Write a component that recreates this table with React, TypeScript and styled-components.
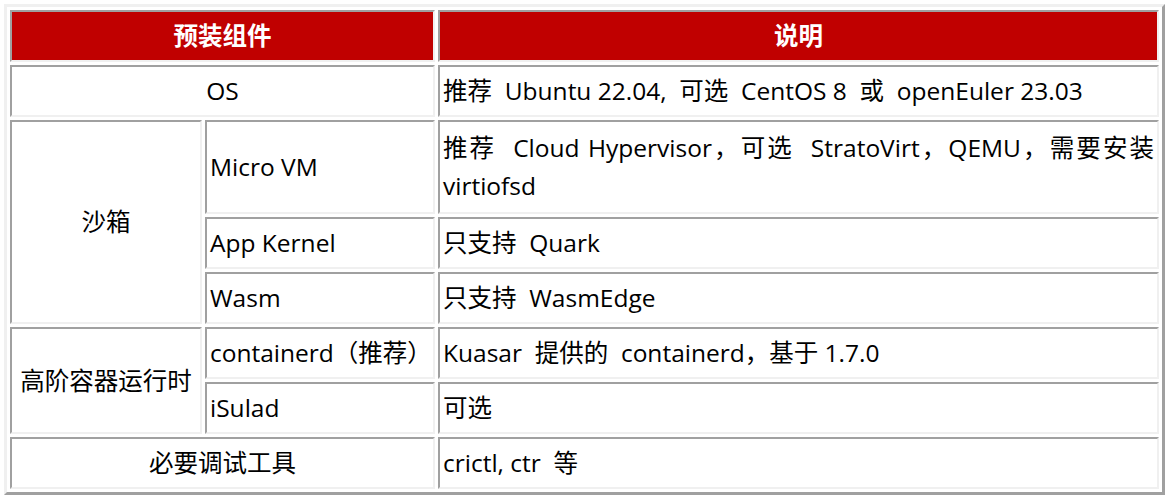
import React from 'react';
import styled, { createGlobalStyle } from 'styled-components';

const Global = createGlobalStyle`
  html, body { margin: 0; padding: 0; background: #ffffff; }
  body { padding: 4px; }
`;

const Table = styled.table`
  width: 1161px;
  table-layout: fixed;
  border-collapse: separate;
  border-spacing: 3px;
  border: 3px solid;
  border-color: #f0f0f0 #a0a0a0 #a0a0a0 #f0f0f0;
  font-family: "Open Sans", "Noto Sans CJK SC", sans-serif;
  font-size: 24.5px;
  color: #000000;
`;

const Col = styled.col<{ $w?: number }>`
  width: ${(p) => (p.$w ? `${p.$w}px` : 'auto')};
`;

const HeadCell = styled.th`
  border: 2px solid;
  border-color: #a0a0a0 #f0f0f0 #f0f0f0 #a0a0a0;
  background: #c00000;
  color: #ffffff;
  font-weight: bold;
  text-align: center;
  padding: 5px 4px;
  line-height: 38px;
`;

const Cell = styled.td<{ $center?: boolean; $tall?: boolean; $justify?: boolean }>`
  border: 2px solid;
  border-color: #a0a0a0 #f0f0f0 #f0f0f0 #a0a0a0;
  padding: ${(p) => (p.$tall ? '7px 3px' : '5px 3px')};
  line-height: 38px;
  vertical-align: middle;
  text-align: ${(p) => (p.$center ? 'center' : p.$justify ? 'justify' : 'left')};
  text-justify: inter-word;
  white-space: normal;
`;

/* wide gap used between CJK and Latin runs, as in the reference */
const G = '\u00a0 ';

export default function App() {
  return (
    <>
      <Global />
      <Table>
        <colgroup>
          <Col $w={192} />
          <Col $w={230} />
          <Col />
        </colgroup>
        <thead>
          <tr>
            <HeadCell colSpan={2}>预装组件</HeadCell>
            <HeadCell>说明</HeadCell>
          </tr>
        </thead>
        <tbody>
          <tr>
            <Cell colSpan={2} $center>OS</Cell>
            <Cell>{`推荐${G}Ubuntu 22.04,${G}可选${G}CentOS 8${G}或${G}openEuler 23.03`}</Cell>
          </tr>
          <tr>
            <Cell rowSpan={3} $center>沙箱</Cell>
            <Cell>Micro VM</Cell>
            <Cell $tall $justify>{`推荐${G}Cloud Hypervisor，可选${G}StratoVirt，QEMU，需要安装 virtiofsd`}</Cell>
          </tr>
          <tr>
            <Cell>App Kernel</Cell>
            <Cell>{`只支持${G}Quark`}</Cell>
          </tr>
          <tr>
            <Cell>Wasm</Cell>
            <Cell>{`只支持${G}WasmEdge`}</Cell>
          </tr>
          <tr>
            <Cell rowSpan={2} $center>高阶容器运行时</Cell>
            <Cell>containerd（推荐）</Cell>
            <Cell>{`Kuasar${G}提供的${G}containerd，基于 1.7.0`}</Cell>
          </tr>
          <tr>
            <Cell>iSulad</Cell>
            <Cell>可选</Cell>
          </tr>
          <tr>
            <Cell colSpan={2} $center>必要调试工具</Cell>
            <Cell>{`crictl, ctr${G}等`}</Cell>
          </tr>
        </tbody>
      </Table>
    </>
  );
}
